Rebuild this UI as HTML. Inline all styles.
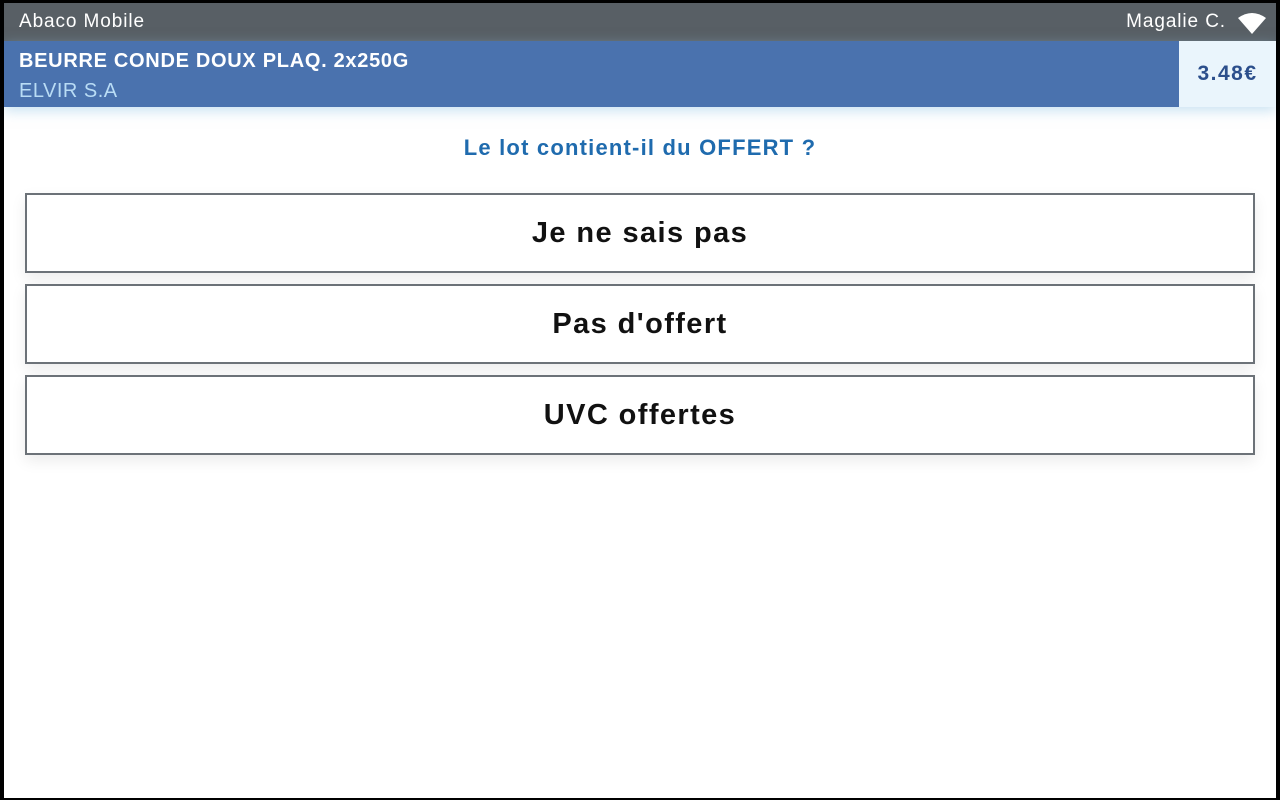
<!DOCTYPE html>
<html><head><meta charset="utf-8"><style>
*{margin:0;padding:0;box-sizing:border-box}
body{width:1280px;height:800px;background:#000;font-family:"Liberation Sans",Arial,sans-serif;position:relative;overflow:hidden}
.frame{position:absolute;left:4px;top:3px;width:1272px;height:795px;background:#fff;overflow:hidden}
.top{position:absolute;left:0;top:0;width:1272px;height:38px;background:#585f65;color:#fff;font-size:19px;letter-spacing:0.9px}
.top .l{position:absolute;left:15px;top:8px}
.top .r{position:absolute;right:50px;top:8px}
.wifi{position:absolute;right:10px;top:9px}
.band{position:absolute;left:0;top:38px;width:1272px;height:66px;background:#4a72ae;box-shadow:0 4px 12px rgba(150,200,230,.5)}
.band .n{position:absolute;left:15px;top:9px;color:#fff;font-weight:bold;font-size:20px;letter-spacing:0.7px}
.band .s{position:absolute;left:15px;top:39px;color:#b9dcf5;font-size:20px;letter-spacing:0.5px}
.price{position:absolute;left:1175px;top:38px;width:97px;height:66px;background:#eaf5fc;color:#2c4f8c;font-weight:bold;font-size:21px;letter-spacing:1.5px;text-align:center;line-height:66px}
.q{position:absolute;left:0;width:1272px;top:132px;text-align:center;color:#1f6bae;font-weight:bold;font-size:22px;letter-spacing:1.2px}
.btn{position:absolute;left:21px;width:1230px;height:80px;border:2px solid #6c7278;background:#fff;text-align:center;line-height:76px;font-weight:bold;font-size:29px;letter-spacing:1.4px;color:#111;box-shadow:0 6px 14px rgba(0,0,0,.08)}
</style></head><body>
<div class="frame">
<div class="top"><span class="l">Abaco Mobile</span><span class="r">Magalie C.</span>
<svg class="wifi" width="28" height="22" viewBox="0 0 28 22"><path d="M0 6 Q14 -4 28 6 L14 22 Z" fill="#fff"/></svg></div>
<div class="band"><div class="n">BEURRE CONDE DOUX PLAQ. 2x250G</div><div class="s">ELVIR S.A</div></div>
<div class="price">3.48€</div>
<div class="q">Le lot contient-il du OFFERT ?</div>
<div class="btn" style="top:190px">Je ne sais pas</div>
<div class="btn" style="top:281px">Pas d'offert</div>
<div class="btn" style="top:372px">UVC offertes</div>
</div>
</body></html>
